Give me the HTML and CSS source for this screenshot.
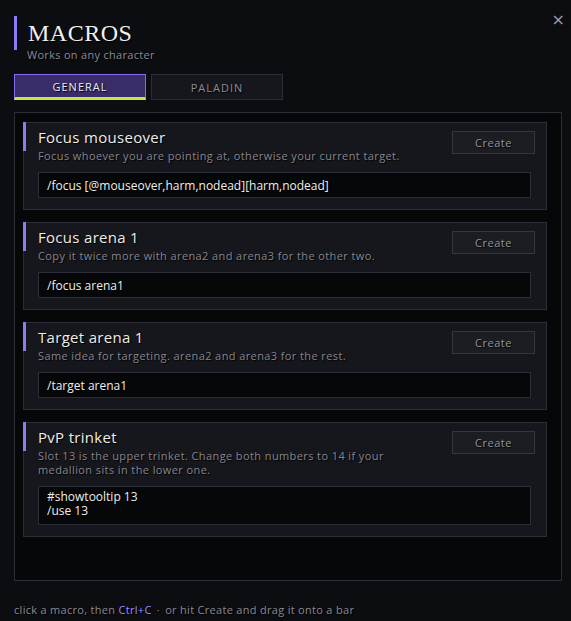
FILE: index.html
```html
<!DOCTYPE html>
<html lang="en">
<head>
    <meta charset="UTF-8">
    <title>Macros</title>
    <link rel="stylesheet" href="styles.css">
</head>
<body>
    <div id="window">
        <button class="close" title="Close">&times;</button>
        <div class="header">
            <h1>MACROS</h1>
        </div>
        <p class="subtitle">Works on any character</p>

        <div class="tabs">
            <button class="tab active">GENERAL</button>
            <button class="tab">PALADIN</button>
        </div>

        <div class="panel">
            <div class="macro">
                <div class="macro-top">
                    <div>
                        <h3>Focus mouseover</h3>
                        <p class="desc">Focus whoever you are pointing at, otherwise your current target.</p>
                    </div>
                    <button class="create">Create</button>
                </div>
                <div class="code">/focus [@mouseover,harm,nodead][harm,nodead]</div>
            </div>

            <div class="macro">
                <div class="macro-top">
                    <div>
                        <h3>Focus arena 1</h3>
                        <p class="desc">Copy it twice more with arena2 and arena3 for the other two.</p>
                    </div>
                    <button class="create">Create</button>
                </div>
                <div class="code">/focus arena1</div>
            </div>

            <div class="macro">
                <div class="macro-top">
                    <div>
                        <h3>Target arena 1</h3>
                        <p class="desc">Same idea for targeting. arena2 and arena3 for the rest.</p>
                    </div>
                    <button class="create">Create</button>
                </div>
                <div class="code">/target arena1</div>
            </div>

            <div class="macro">
                <div class="macro-top">
                    <div>
                        <h3>PvP trinket</h3>
                        <p class="desc">Slot 13 is the upper trinket. Change both numbers to 14 if your medallion sits in the lower one.</p>
                    </div>
                    <button class="create">Create</button>
                </div>
                <div class="code tall">#showtooltip 13<br>/use 13</div>
            </div>
        </div>

        <p class="footer">click a macro, then <span class="key">Ctrl+C</span> <span class="dot">&middot;</span> or hit Create and drag it onto a bar</p>
    </div>
</body>
</html>
```

FILE: styles.css
```css
html, body {
    margin: 0;
    padding: 0;
    background-color: #0c0d11;
}
body {
    font-family: 'Open Sans', 'Noto Sans', sans-serif;
    color: #e8e6e3;
    text-shadow: 1px 1px 1px #000;
}
#window {
    position: relative;
    padding: 16px 9px 0 14px;
    height: 621px;
    box-sizing: border-box;
}
.close {
    position: absolute;
    top: 10px;
    right: 6px;
    background: none;
    border: none;
    color: #9b9ba6;
    font-size: 16px;
    font-family: 'DejaVu Sans', sans-serif;
    cursor: pointer;
    padding: 0;
}
.header {
    border-left: 3px solid #8b7cf6;
    padding-left: 11px;
    height: 34px;
    display: flex;
    align-items: center;
}
h1 {
    margin: 0;
    font-family: 'Liberation Serif', serif;
    font-weight: normal;
    font-size: 24px;
    letter-spacing: 0.5px;
    color: #f2f0ec;
}
.subtitle {
    margin: -2px 0 0 13px;
    font-size: 11px;
    line-height: 14px;
    letter-spacing: 0.3px;
    color: #8a8a96;
}
.tabs {
    display: flex;
    gap: 5px;
    margin-top: 12px;
}
.tab {
    width: 132px;
    height: 26px;
    background-color: #16171d;
    border: 1px solid #2c2d37;
    color: #8d8d98;
    font-family: 'Open Sans', sans-serif;
    font-size: 11px;
    letter-spacing: 1px;
    text-shadow: 1px 1px 1px #000;
    cursor: pointer;
}
.tab.active {
    background-color: #3a2c69;
    border-color: #7e6ef0;
    border-bottom: 3px solid #c6e44a;
    color: #ebe9f5;
}
.panel {
    margin-top: 12px;
    height: 469px;
    box-sizing: border-box;
    border: 1px solid #2b2c36;
    background-color: #060709;
    padding: 9px 14px 0 8px;
    display: flex;
    flex-direction: column;
    gap: 12px;
}
.macro {
    position: relative;
    background-color: #16171c;
    border: 1px solid #2b2c36;
    padding: 4px 11px 11px 14px;
}
.macro::before {
    content: "";
    position: absolute;
    left: -1px;
    top: -1px;
    width: 3px;
    height: 29px;
    background-color: #8b7cf6;
}
.macro-top {
    display: flex;
    justify-content: space-between;
    align-items: flex-start;
}
h3 {
    margin: 0 0 2px 0;
    font-weight: normal;
    font-size: 15px;
    line-height: 20px;
    letter-spacing: 0.3px;
    color: #eeece8;
}
.desc {
    margin: 0;
    font-size: 11px;
    line-height: 14px;
    letter-spacing: 0.4px;
    color: #85858f;
    max-width: 400px;
}
.create {
    flex-shrink: 0;
    width: 83px;
    height: 23px;
    margin-top: 4px;
    background-color: #1c1d23;
    border: 1px solid #34353f;
    color: #93939d;
    font-family: 'Open Sans', sans-serif;
    font-size: 11px;
    letter-spacing: 0.5px;
    text-shadow: 1px 1px 1px #000;
    cursor: pointer;
}
.code {
    margin-top: 9px;
    margin-right: 4px;
    background-color: #060709;
    border: 1px solid #2c2d38;
    height: 24px;
    padding: 0 8px;
    display: flex;
    align-items: center;
    font-size: 12px;
    color: #f0eee9;
}
.code.tall {
    height: 39px;
    display: block;
    padding-top: 3px;
    box-sizing: border-box;
    line-height: 14px;
}
.footer {
    margin: 22px 0 0 0;
    font-size: 11px;
    line-height: 14px;
    letter-spacing: 0.3px;
    color: #8a8a95;
}
.key {
    color: #9d8cff;
}
.dot {
    margin: 0 2px;
}
```
